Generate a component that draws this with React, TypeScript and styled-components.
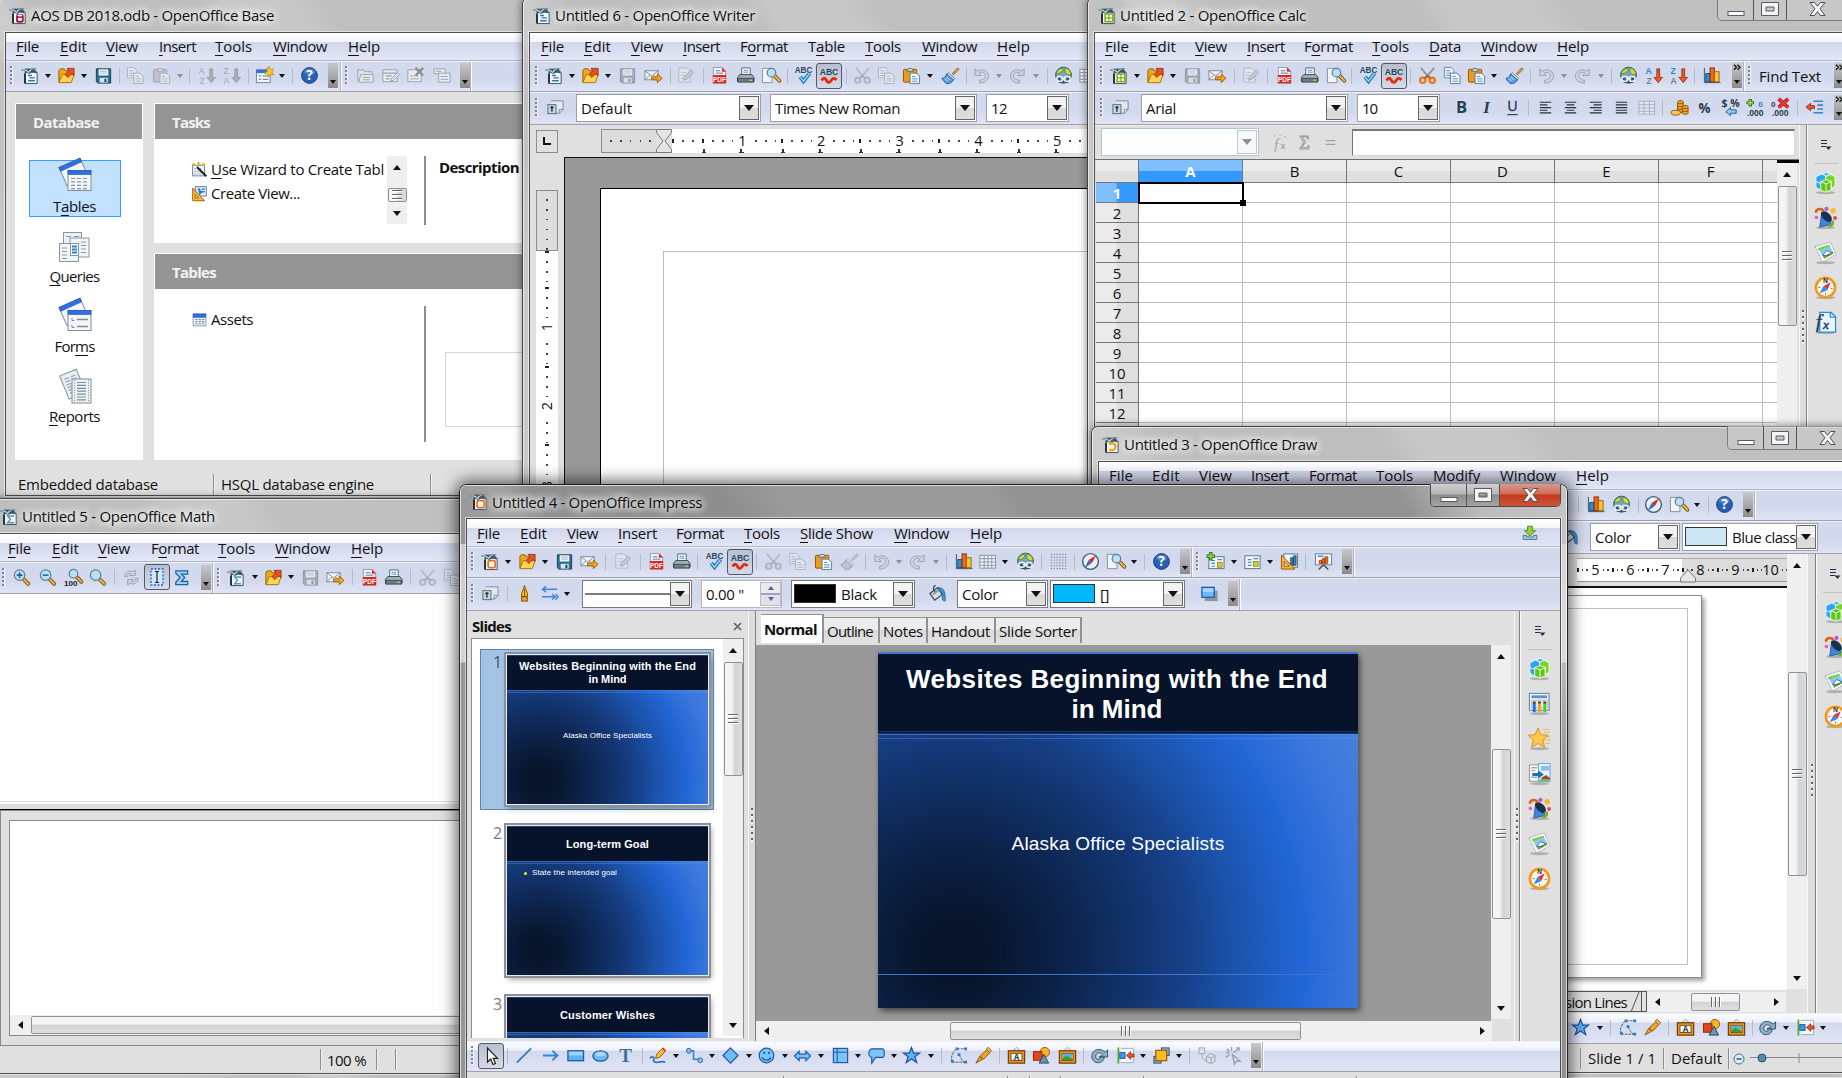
import React, { ReactNode, useLayoutEffect, useRef, useState } from 'react';
import styled, { createGlobalStyle, css } from 'styled-components';

const UI = '"Open Sans", "Noto Sans", sans-serif';
const ARIAL = '"Liberation Sans", Arial, sans-serif';

const Global = createGlobalStyle`
  * { box-sizing: border-box; }
  html, body { margin: 0; padding: 0; overflow: hidden; }
  body { font-family: ${UI}; font-size: 15px; line-height: 20px; color: #111; background: #c4c4c4; }
  svg { display: block; flex: none; }
`;

/* ---------- text ---------- */

const FitBox = styled.span<{ $w: number; $bold?: boolean; $color?: string; $size?: number; $font?: string; $lh?: number }>`
  display: block;
  flex: none;
  width: ${p => p.$w}px;
  white-space: nowrap;
  font-weight: ${p => (p.$bold ? 700 : 400)};
  color: ${p => p.$color || 'inherit'};
  font-size: ${p => p.$size || 15}px;
  font-family: ${p => p.$font || UI};
  line-height: ${p => (p.$lh ? p.$lh + 'px' : '20px')};
  u { text-decoration: underline; text-decoration-thickness: 1px; text-underline-offset: 3px; text-decoration-skip-ink: none; }
`;

type FitProps = { w: number; t: string; bold?: boolean; color?: string; size?: number; font?: string; lh?: number };
function Fit({ w, t, bold, color, size, font, lh }: FitProps) {
  const ref = useRef<HTMLSpanElement>(null);
  const [ls, setLs] = useState(0);
  const i = t.indexOf('_');
  const count = i < 0 ? t.length : t.length - 1;
  useLayoutEffect(() => {
    if (ref.current) setLs((w - ref.current.getBoundingClientRect().width) / count);
  }, [w, count]);
  return (
    <FitBox $w={w} $bold={bold} $color={color} $size={size} $font={font} $lh={lh}>
      <span ref={ref} style={{ letterSpacing: ls }}>
        {i < 0 ? t : <>{t.slice(0, i)}<u>{t[i + 1]}</u>{t.slice(i + 2)}</>}
      </span>
    </FitBox>
  );
}

/* ---------- icons ---------- */

const page = (x = 3, y = 2, w = 13, h = 16, s = '#3d5a6c') => (
  <path d={`M${x} ${y}h${w - 4}l4 4v${h - 4}h${-w}z`} fill="#eef3f6" stroke={s} />
);
const docBase = (
  <>
    <path d="M4.5 3.5h9l3.500 3.500v11.500h-12.500z" fill="#f0f5f7" stroke="#35505f" />
    <path d="M4 3h9.500l3 3.500v1.500c-3-1.500-6-1-8 .500-1-1-3-1.500-4.500-1z" fill="#3a5765" />
    <path d="M0 4.500c3.500-2 6-1 7.500 1.200C9.500 3 13 2 16 3c-4 0-6 2-8 5C6 5.500 4 4.500 0 4.500z" fill="#dbe7ee" stroke="#54707f" strokeWidth=".6" />
    <path d="M4.200 8v10.500" stroke="#14262f" strokeWidth="1.800" />
  </>
);
const lens = (x: number, y: number, r: number) => (
  <>
    <path d={`M${x + r * 0.7} ${y + r * 0.7}l5.2 5.4`} stroke="#6d4a0c" strokeWidth="4" strokeLinecap="round" />
    <path d={`M${x + r * 0.8} ${y + r * 0.8}l4.8 5`} stroke="#eeb445" strokeWidth="2.2" strokeLinecap="round" />
    <circle cx={x} cy={y} r={r} fill="#b9e0f7" stroke="#5f7f92" strokeWidth="1.3" />
  </>
);
const frame = (inner: ReactNode) => (
  <>
    <path d="M6 5l4-3.5L14 5" fill="none" stroke="#8d9aa5" />
    <rect x="1.5" y="5" width="17" height="13" fill="#e9a12c" stroke="#7a4205" strokeWidth="1.4" />
    <rect x="4.2" y="7.7" width="11.6" height="7.6" fill="#f7fafc" stroke="#7a4205" />
    {inner}
  </>
);
const winTop = (x: number, y: number, w: number, h: number, c = '#2f6fe4') => (
  <>
    <rect x={x} y={y} width={w} height={h} fill="#f2f6f9" stroke="#7f8e99" />
    <rect x={x} y={y} width={w} height="4" fill={c} stroke="#2450a8" strokeWidth=".6" />
  </>
);
const dashes = (x: number, y: number, c: number, r: number, dx: number, dy: number, col = '#8696a2', w = 3) => {
  let d = '';
  for (let j = 0; j < r; j++) for (let k = 0; k < c; k++) d += `M${x + k * dx} ${y + j * dy}h${w}`;
  return <path d={d} stroke={col} strokeWidth="1.2" />;
};
const bar = (ws: number[][]) => <path d={ws.map(([a, b], k) => `M${a} ${4.5 + k * 2.8}H${b}`).join('')} stroke="#26333d" strokeWidth="1.2" />;
const abcTxt = (y: number) => (
  <text x="10" y={y} fontSize="8.6" fontWeight="700" fontFamily="Liberation Sans, sans-serif" textAnchor="middle" fill="#26485c">ABC</text>
);
const tx = (x: number, y: number, s: number, t: string, fill: string, extra: object = {}) => (
  <text x={x} y={y} fontSize={s} fontWeight="700" fontFamily="Open Sans, sans-serif" fill={fill} {...extra}>{t}</text>
);
const small = { fontFamily: 'Liberation Sans, sans-serif' };
const downArrow = <path d="M13.500 3h3v9h3L15 17.500 10.500 12h3z" fill="#e8582a" stroke="#8a2306" strokeWidth=".8" />;
const shadow = <ellipse cx="12" cy="22.6" rx="10" ry="1.6" fill="#000" opacity=".22" />;

const glyphs: Record<string, ReactNode> = {
  writer: <>{docBase}<path d="M7.500 10h4M9 12.500h5.500M7.500 15.500h7" stroke="#2b78b5" strokeWidth="1.500" /></>,
  base: <>{docBase}<rect x="7.500" y="8.500" width="8" height="9" rx="2" fill="#a3134a" /><ellipse cx="11.500" cy="10" rx="2.600" ry="1" fill="#fff" /><rect x="9.500" y="12.500" width="4" height="3" fill="#fff" /></>,
  calc: <>{docBase}<rect x="7.500" y="8.500" width="8" height="8" fill="#fff" stroke="#7eb01a" strokeWidth="1.600" /><path d="M11.500 8.500v8M7.500 12.500h8" stroke="#7eb01a" strokeWidth="1.300" /></>,
  impress: <>{docBase}<rect x="7.500" y="9" width="7.500" height="7.500" rx="1.500" fill="#fff" stroke="#f26a12" strokeWidth="1.800" /></>,
  draw: <>{docBase}<path d="M7.500 10c4-3 7.500 0 6.500 3.500-1 3-4 3-6.500 2" fill="none" stroke="#f0a81c" strokeWidth="2.600" /></>,
  math: <>{docBase}<path d="M14 10.500v-1H8l3 3.500-3 3.500h6v-1" fill="none" stroke="#5f90bb" strokeWidth="1.500" /></>,
  open: <><path d="M2 17V4.500l1.500-1.500h4L9 5h6v3" fill="#f0a51e" stroke="#9a5a04" /><path d="M2 17.500L5.500 9H18l-3 8.500z" fill="#fdd456" stroke="#b06f08" /><path d="M8.500 9l4-4-2-2.500h7.500v7.500L15.500 8l-4 4z" fill="#e8541f" stroke="#8c1f06" strokeWidth=".8" /></>,
  save: <><path d="M2.500 3h15v15H4l-1.500-1.500z" fill="#2b6f97" stroke="#173f57" /><rect x="5" y="3.500" width="10" height="6.500" fill="#f4f8fa" /><path d="M6.500 5.500h7M6.500 7.500h7" stroke="#9db2be" /><rect x="6" y="12.500" width="8.500" height="5" fill="#dbe4ea" /><rect x="11" y="13.500" width="2" height="3.500" fill="#173f57" /></>,
  mail: <><rect x="1" y="5" width="14" height="9.500" fill="#eef2f4" stroke="#7d8b94" /><path d="M1 5l7 5.500L15 5M1 14.500l5-5M15 14.500l-5-5" fill="none" stroke="#7d8b94" /><path d="M8 11.500h6V8.500l5 4.500-5 4.500v-3H8z" fill="#f5a81f" stroke="#a15c05" /></>,
  edit: <>{page(3, 2, 12, 15, '#7a8890')}<path d="M5 7h6M5 10h6M5 13h4" stroke="#94a2ab" /><path d="M8 15l1-3.500L16 4l2.500 2.500-7 7.500z" fill="#d8b45a" stroke="#6c6350" /></>,
  pdf: <><path d="M3.500 1.500h9l4 4v13h-13z" fill="#f3f6f8" stroke="#8d9aa4" /><path d="M12.500 1v5h4.500z" fill="#e6311f" /><path d="M6 5h5M6 7.500h8" stroke="#3f7fb0" /><rect x="3" y="9.500" width="14" height="8.500" fill="#e4201c" /><text x="10" y="16.400" fontSize="6.800" fontWeight="700" textAnchor="middle" fill="#fff" fontFamily="Liberation Sans, sans-serif">PDF</text></>,
  print: <><path d="M6 2h9v8H6z" fill="#f4f7f9" stroke="#52697a" /><path d="M8 4.500h5M8 6.500h5" stroke="#5c98c8" /><path d="M4 9h12.500l2.500 3v4H1.500v-4z" fill="#a3b0b7" stroke="#384850" /><path d="M2 13h16.500v4H2z" fill="#6d7b82" stroke="#2d3a40" strokeWidth=".8" /><path d="M14 15h3" stroke="#8ee04a" strokeWidth="1.500" /></>,
  preview: <><path d="M1.500 2.500h10v15h-10z" fill="#f1f5f7" stroke="#82929d" />{lens(11, 7, 4.500)}</>,
  spell: <>{abcTxt(7.500)}<path d="M6.500 11.500l3.500 4.500 6.500-8.500" fill="none" stroke="#1c6fa8" strokeWidth="4" /><path d="M6.500 11.500l3.500 4.500 6.500-8.500" fill="none" stroke="#8ed0f5" strokeWidth="1.800" /></>,
  auto: <>{abcTxt(9)}<path d="M2.500 14.500c2-3 3.500-3 5 0s3.500 2 5-.500 3-2 5 0" fill="none" stroke="#e22c12" strokeWidth="2.800" /></>,
  cut: <><path d="M3 2l8.500 10M17 2L8.500 12" stroke="#8a98a2" strokeWidth="2" /><circle cx="5" cy="15" r="2.800" fill="none" stroke="#e87a16" strokeWidth="2.400" /><circle cx="15" cy="15" r="2.800" fill="none" stroke="#e87a16" strokeWidth="2.400" /><path d="M7 13l3-3 3 3" stroke="#c05a0a" strokeWidth="2" fill="none" /></>,
  copy: <><path d="M1.500 1.500h7l3 3v8h-10z" fill="#eff4f7" stroke="#6886a0" /><path d="M3.500 5h4M3.500 7.500h5M3.500 10h4" stroke="#4a8ccc" /><path d="M8 7.500h6.500l3.500 3v8H8z" fill="#f6f9fb" stroke="#5a7a94" /><path d="M10 11h3.500M10 13.500h6M10 16h6" stroke="#4a8ccc" /></>,
  paste: <><rect x="1.500" y="3.500" width="14" height="13.500" rx="1" fill="#e89b1c" stroke="#935403" /><path d="M5 5.500c0-4 7-4 7 0z" fill="#d9dee2" stroke="#5b6870" /><path d="M8.500 7.500h6.500l3.500 3v8h-10z" fill="#f6f9fb" stroke="#5a7a94" /><path d="M10.500 11h3.500M10.500 13.500h6M10.500 16h6" stroke="#4a8ccc" /></>,
  brush: <><path d="M12 8l5.500-6 1.500 1.500L13.500 9z" fill="#ecb64a" stroke="#86590c" /><path d="M7.500 7l7 6-2 2-7-6z" fill="#dfe6ea" stroke="#5d7c94" /><path d="M6 8.500l7 6c-1 3-5 4.500-7 4-2-1.500-4-3-5-5.500 2 0 4-1.500 5-4.500z" fill="#5a9fe0" stroke="#205a9c" /><path d="M4 13l3 3M6 11.500l3.500 3" stroke="#cfe6fa" /></>,
  undo: <path d="M3 3v7h7L7.500 7.500c4-2 7 0 6.500 3.500-.500 2.500-3 4-6 4v3c5 0 9-2.500 9.500-7S12 1.500 5.500 5.500z" fill="#cdd3da" stroke="#9aa2ac" />,
  redo: <path d="M17 3v7h-7l2.500-2.500c-4-2-7 0-6.500 3.500.500 2.500 3 4 6 4v3c-5 0-9-2.500-9.500-7S8 1.500 14.500 5.500z" fill="#cdd3da" stroke="#9aa2ac" />,
  globe: <><circle cx="10" cy="9.500" r="8.300" fill="#6fa6cc" stroke="#2f5a66" /><path d="M2 8c2-5 6-6 7-5s0 3-2 4-3 1-5 1zM12 2c4 1 6 4 6 7-2 1-5 0-6-2s-1-4 0-5z" fill="#c9d94a" stroke="#557a1a" strokeWidth=".8" /><path d="M3 12h14l-2 5.500-5 1-5-1z" fill="#35566a" /><rect x="3" y="11" width="6.500" height="5" rx="2.500" fill="none" stroke="#f2f6f8" strokeWidth="1.500" /><rect x="10.500" y="11" width="6.500" height="5" rx="2.500" fill="none" stroke="#f2f6f8" strokeWidth="1.500" /><path d="M7 13.500h6" stroke="#f2f6f8" strokeWidth="1.500" /></>,
  table: <><rect x="2" y="3.500" width="16.500" height="13.500" fill="#f4f7f9" stroke="#8295a2" /><path d="M2 7h16.500M2 10.500h16.500M2 14h16.500M6.500 3.500V17M10.500 3.500V17M14.500 3.500V17" stroke="#8295a2" /></>,
  merge: <><rect x="2" y="3.500" width="16.500" height="13.500" fill="#e2e6ee" stroke="#a9b0bc" /><path d="M2 7h16.500M2 10.500h16.500M2 14h16.500M7.500 3.500V17M13 3.500V17" stroke="#a9b0bc" /></>,
  grid: <path d={[2, 5, 8, 11, 14, 17].map(y => `M2 ${y + 0.5}H18`).join('')} stroke="#4c5562" strokeWidth="1" strokeDasharray="1 2" />,
  compass: <><circle cx="10" cy="10" r="8.300" fill="#e8f0f6" stroke="#46606f" strokeWidth="1.500" /><path d="M16 3.500L8 8.500l3.500 3z" fill="#e3281a" /><path d="M4 16.500l4-8 3.500 3z" fill="#2b6fd0" /></>,
  help: <><circle cx="10" cy="10" r="8.300" fill="#2a60b4" stroke="#15397c" /><ellipse cx="10" cy="6" rx="6" ry="3.500" fill="#6a9be0" opacity=".5" />{tx(10, 15.200, 14.500, '?', '#fff', { textAnchor: 'middle' })}</>,
  chart: <><path d="M2.500 2v15.500h17" fill="none" stroke="#3d4f5c" /><rect x="4" y="8" width="4.500" height="8.500" fill="#2e8fd5" stroke="#114a7a" /><rect x="8.500" y="2" width="4.500" height="14.500" fill="#ee6a1c" stroke="#8a2b04" /><rect x="13" y="6" width="5" height="10.500" fill="#fbc53a" stroke="#9a6205" /></>,
  az: <>{tx(1.5, 8.5, 9, 'A', '#2b84cf', small)}{tx(2.5, 19, 9, 'Z', '#76838d', small)}{downArrow}</>,
  za: <>{tx(1.5, 8.5, 9, 'Z', '#2b84cf', small)}{tx(1.5, 19, 9, 'A', '#76838d', small)}{downArrow}</>,
  styles: <><path d="M5 3h13v9l-4 4H9" fill="#e2e9ef" stroke="#7a8a99" /><path d="M18 12h-4v4z" fill="#fff" stroke="#7a8a99" /><rect x="2" y="7" width="8.500" height="9.500" fill="#c9d6de" stroke="#51687a" /><path d="M6.200 8.500v6M4.500 10h3.500" stroke="#22394a" strokeWidth="1.500" /></>,
  B: tx(10, 16, 17.500, 'B', '#26404f', { textAnchor: 'middle' }),
  I: <text x="10" y="16" fontSize="18" fontWeight="700" fontStyle="italic" fontFamily="Liberation Serif, serif" textAnchor="middle" fill="#26404f">I</text>,
  U: <><text x="10" y="14" fontSize="15" fontFamily="Open Sans, sans-serif" textAnchor="middle" fill="#26404f" stroke="#26404f" strokeWidth=".4">U</text><path d="M4.500 17.500h11" stroke="#26404f" strokeWidth="1.200" /></>,
  left: bar([[4, 16], [4, 12], [4, 16], [4, 12], [4, 16]]),
  center: bar([[4, 16], [6, 14], [4, 16], [6, 14], [4, 16]]),
  right: bar([[4, 16.5], [8, 16.5], [4, 16.5], [8, 16.5], [4, 16.5]]),
  just: bar([[4, 16], [4, 16], [4, 16], [4, 16], [4, 16]]),
  coins: <><rect x="8" y="3" width="6" height="12" rx="1.500" fill="#f2a92a" stroke="#945205" /><path d="M8 6h6M8 9h6M8 12h6" stroke="#945205" /><rect x="13" y="8" width="6" height="9" rx="1.500" fill="#f2a92a" stroke="#945205" /><path d="M13 11h6M13 14h6" stroke="#945205" /><ellipse cx="6" cy="15.500" rx="5" ry="2.500" fill="#fbc75a" stroke="#945205" /></>,
  pct: tx(10, 15.500, 14, '%', '#2b3d4c', { textAnchor: 'middle' }),
  dpct: <>{tx(10, 9.500, 11, '$ %', '#2b3d4c', { textAnchor: 'middle' })}<path d="M16 12.500h-6v-2.500l-5 4.500 5 4v-2.500h6z" fill="#8ccdf2" stroke="#1b5f92" /></>,
  adec: <><path d="M4.500 1v8M.500 5h8" stroke="#2c7a10" strokeWidth="3.400" /><path d="M4.500 2v6M1.500 5h6" stroke="#9be05a" strokeWidth="1.400" />{tx(13, 9, 8.500, '0', '#2b7ad0', small)}{tx(1, 18.500, 9, '.000', '#2b3d4c', small)}</>,
  ddec: <>{tx(0, 9, 8.500, '0', '#2b3d4c', small)}{tx(1, 18.500, 9, '.000', '#2b3d4c', small)}<path d="M8 1l10 9M18 1L8 10" stroke="#a30d0d" strokeWidth="3.800" /><path d="M8 1l10 9M18 1L8 10" stroke="#f23a2c" strokeWidth="2.200" /></>,
  outdent: <><path d="M9 3.500h10M13 7.500h6M13 11.500h6M9 15.500h10" stroke="#3d82c2" strokeWidth="1.600" /><path d="M10 8v3H6v2.500L1 9.500 6 5.500V8z" fill="#e8582a" stroke="#8a2306" strokeWidth=".8" /></>,
  fxw: <><text x="3" y="17" fontSize="17" fontStyle="italic" fontFamily="Liberation Serif, serif" fill="#a9a9a9">ƒ</text>{tx(11, 17, 9, 'x', '#a9a9a9')}<path d="M4 3h2M10 2h2M15 4h2" stroke="#b5b5b5" strokeWidth="1.500" /></>,
  sumg: <text x="10" y="17" fontSize="19" fontFamily="Liberation Serif, serif" textAnchor="middle" fill="#dcdcdc" stroke="#9d9d9d">Σ</text>,
  eqg: <path d="M5 8h10M5 12h10" stroke="#9f9f9f" strokeWidth="1.200" />,
  sigma: <path d="M4 3h12.500v3.500H10l3.500 3.500L10 14h6.500v3.500H4V15l4.500-5L4 5.500z" fill="#9cd0f2" stroke="#1b62a0" strokeWidth="1.300" />,
  zin: <>{lens(8, 7.500, 5.500)}<path d="M5 7.500h6M8 4.500v6" stroke="#1c5f9c" strokeWidth="1.600" /></>,
  zout: <>{lens(8, 7.500, 5.500)}<path d="M5 7.500h6" stroke="#1c5f9c" strokeWidth="1.600" /></>,
  z100: <>{lens(10, 6, 4.500)}<text x="0" y="18.500" fontSize="8.500" fontWeight="700" fontFamily="Liberation Sans, sans-serif" fill="#222">100</text></>,
  zall: lens(8, 7.500, 5.500),
  refresh: <path d="M3 9c0-5 5-7 9-5l2-2v6H8l2-2C7 5 5 7 6 9zM17 11c0 5-5 7-9 5l-2 2v-6h6l-2 2c3 1 5-1 4-3z" fill="#cdd3da" stroke="#9aa2ac" />,
  fcursor: <><rect x="4" y="2" width="12" height="16" fill="#cfe6fa" stroke="#1f62d6" strokeWidth="1.300" strokeDasharray="2 1.500" /><path d="M8 4.500h4M8 15.500h4M10 4.500v11" stroke="#222" strokeWidth="1.200" /></>,
  slidenew: <><rect x="3" y="5" width="16" height="12.500" fill="#f6f8f8" stroke="#587284" /><path d="M5.500 9h4M5.500 12h4M5.500 15h4M12 8h5" stroke="#3f90cc" strokeWidth="1.300" /><rect x="12" y="11" width="5" height="5" fill="#d7c832" stroke="#7d7310" strokeWidth=".7" /><path d="M5 0v9M.500 4.500h9" stroke="#2c7a10" strokeWidth="3.600" /><path d="M5 1v7M1.500 4.500h7" stroke="#8fdd4a" strokeWidth="1.500" /></>,
  slide: <><rect x="2" y="4" width="16" height="13.500" fill="#f6f8f8" stroke="#587284" /><path d="M5 8h4M5 11h4M5 14h4M11 7h5" stroke="#3f90cc" strokeWidth="1.300" /><rect x="11" y="10" width="5" height="5" fill="#d7c832" stroke="#7d7310" strokeWidth=".7" /></>,
  design: <><rect x="4" y="2" width="14.500" height="14" fill="#eef4f8" stroke="#587284" /><path d="M11 14V6h3v8zM14 14V4h3v10z" fill="#3f7fb0" stroke="#1d415c" strokeWidth=".7" /><path d="M1.500 3v15h14z" fill="#fbb52c" stroke="#96540a" /><path d="M4.500 10v5h5z" fill="#eef4f8" stroke="#96540a" /></>,
  present: <><rect x="1.500" y="2" width="17" height="11.500" fill="#f1f4f6" stroke="#6b7f8c" /><path d="M4 4.500h6" stroke="#4b8fcc" strokeWidth="1.500" /><path d="M5.500 12V9h3v3zM8.500 12V7h3v5zM11.500 12V5h3v7z" fill="#e8742c" stroke="#8a2b04" strokeWidth=".7" /><path d="M10 13.500L5 18.500M10 13.500l5 5" stroke="#48555d" strokeWidth="1.600" /></>,
  pen: <><path d="M7 13c-1-4 2-7 3-11.500C11 6 14 9 13 13z" fill="#fbc026" stroke="#7d4a03" /><path d="M10 5v7" stroke="#7d4a03" /><rect x="7" y="13.500" width="6" height="4.500" fill="#f2a31c" stroke="#7d4a03" /></>,
  arrows: <path d="M18 5.500H3M6.500 2.500L2.500 5.500l4 3M2 13.500h15M13 10.500l2.500 3-2.500 3M16.500 10.500l2.500 3-2.500 3" fill="none" stroke="#3a86dc" strokeWidth="1.500" />,
  bucket: <><path d="M2 10l8-6 5 7-8 6z" fill="#d8dfe4" stroke="#36444e" strokeWidth="1.200" /><path d="M8 1.500c-3 1-3 5 0 7" fill="none" stroke="#36444e" strokeWidth="1.300" /><path d="M10 4c5-1 9 2 8 14-2 0-3-1-3-4V10z" fill="#3f94d2" stroke="#1d5c8e" strokeWidth=".8" /><path d="M5 11l6-4.500" stroke="#8a979f" strokeWidth="2" /></>,
  shadowed: <><rect x="5" y="7" width="13.500" height="11" fill="#8f959f" /><rect x="2" y="3.500" width="13" height="10.500" fill="#6fb7f5" stroke="#1f5cb0" strokeWidth="1.400" /><rect x="3" y="4.500" width="11" height="4" fill="#a7d6fb" /></>,
  download: <><path d="M1.500 13h4v2h9v-2h4v5h-17z" fill="#a9d4ee" stroke="#2a607e" /><path d="M7 1.500h6v5.500h4L10 14 3 7h4z" fill="#93cf3a" stroke="#3f7a0d" /></>,
  pointer: <path d="M6.500 2v14l3.200-3 2.300 5.500 2.500-1-2.300-5.200h4.300z" fill="#fff" stroke="#222" strokeWidth="1.200" />,
  line: <path d="M3 17.500L18 2.500" stroke="#3273bd" strokeWidth="1.700" />,
  arrow: <path d="M2 10h15M12 5l5.500 5-5.500 5" fill="none" stroke="#3a86d6" strokeWidth="1.900" />,
  rect: <><rect x="2" y="5" width="16.500" height="10.500" fill="#5cb1f2" stroke="#1c55a0" strokeWidth="1.300" /><rect x="3" y="6" width="14.500" height="4" fill="#9dd2fa" /></>,
  ellipse: <><ellipse cx="10" cy="10.500" rx="8" ry="5.500" fill="#6dbaf4" stroke="#1c55a0" strokeWidth="1.300" /><ellipse cx="10" cy="8.500" rx="5.500" ry="2.300" fill="#a9d8fb" /></>,
  T: <text x="10" y="17" fontSize="20" fontWeight="700" fontFamily="Liberation Serif, serif" textAnchor="middle" fill="#3f7396">T</text>,
  pencil: <><path d="M1 13c2-3 5-1 4 1s1 4 5 3c2-.500 4-1 7 0" fill="none" stroke="#2f76b8" strokeWidth="1.800" /><path d="M7 13l1-4 6.500-7 3 3-6.500 7z" fill="#fbc23a" stroke="#8a5208" /><path d="M13.500 3l3 3 1.500-1.500-3-3z" fill="#e0442a" /></>,
  connector: <><path d="M4 5h5v9h7" fill="none" stroke="#3a82d0" strokeWidth="1.700" /><circle cx="4" cy="5" r="2.500" fill="#8bc4f2" stroke="#1f5ca8" /><circle cx="16" cy="15" r="2.500" fill="#8bc4f2" stroke="#1f5ca8" /></>,
  diamond: <path d="M10 2l8 8-8 8-8-8z" fill="#6dbcf5" stroke="#1c55a0" strokeWidth="1.200" />,
  smile: <><circle cx="10" cy="10" r="7.700" fill="#7cc4f6" stroke="#1c55a0" strokeWidth="1.200" /><path d="M5.500 12c2 4 7 4 9 0" fill="none" stroke="#1c55a0" strokeWidth="1.300" /><path d="M7.500 6v2.500M12.500 6v2.500" stroke="#1c55a0" strokeWidth="1.700" /></>,
  dbl: <path d="M1.500 10.500L6.500 5.500v3h7v-3l5 5-5 5v-3h-7v3z" fill="#7cc4f6" stroke="#1c60b0" strokeWidth="1.200" />,
  flow: <><rect x="2.500" y="2.500" width="15" height="15" fill="#7cc4f6" stroke="#1c55a0" strokeWidth="1.200" /><path d="M6.500 2.500v15M2.500 6.500h15" stroke="#1c55a0" /></>,
  callout: <path d="M5 3h11c3 0 3 9 0 9H9l-4 6v-6c-4 0-4-9 0-9z" fill="#7cc4f6" stroke="#1c55a0" strokeWidth="1.200" />,
  star: <path d="M10 1.500l2.300 6h6.200l-5 3.800 2 6.200-5.500-3.800-5.500 3.800 2-6.200-5-3.800h6.200z" fill="#62aef2" stroke="#1a4d96" strokeWidth="1.200" />,
  points: <><path d="M3 17C1 10 6 4 8 3h9M10 10c3 0 2 6 7 7M3 17h14" fill="none" stroke="#4a5a66" strokeDasharray="3 1" /><path d="M2 16h3M7 3h3M16 3h3M9 9h3M16 17h3" stroke="#2f7cc4" strokeWidth="3" /></>,
  glue: <><path d="M2 18l4-7 3 3zM6.500 10.500l7-6.500 3 3-6.500 7z" fill="#f5a623" stroke="#8a5208" /><path d="M13 3l2-1.500 3.500 3.500-2 2z" fill="#f9cf68" stroke="#8a5208" /></>,
  tframe: frame(tx(10, 14.8, 8.500, 'A', '#24424f', { textAnchor: 'middle' })),
  pframe: frame(<><rect x="4.700" y="8.200" width="10.600" height="4" fill="#58b0e8" /><path d="M4.700 15v-2.500l4-2 6.600 2.500v2z" fill="#3f9a28" /></>),
  shapes: <><circle cx="13.500" cy="6.500" r="5" fill="#fbb52c" stroke="#96540a" /><rect x="1.500" y="6" width="9" height="9" fill="#e2471c" stroke="#8a2306" /><path d="M12.500 8.500l5 9.500h-10z" fill="#6d93a8" stroke="#2b4656" /></>,
  rotate: <path d="M18.500 4v7.500h-7.500l2.500-2.500c-3-3-7-2-7.500 1.500-.300 3 3 4.500 5 2.500l-1.500-1.500 1-1 4.500 1.500c-.500 4-4 6-7.500 5.500C4 17 1.500 14 2 10c.500-6 8-9 14-3.500z" fill="#8db0c6" stroke="#2d5064" />,
  align: <><path d="M2.500 1.500v17" stroke="#4fae1e" strokeWidth="1.800" /><path d="M5 2.500h13.500v15H5" fill="#f4f7f9" stroke="#a1acb4" /><rect x="4" y="7" width="5.500" height="6" fill="#3f9be6" stroke="#1c55a0" /><path d="M19 8.500v3h-3.500v2.500L11 10l4.500-4v2.500z" fill="#e8582a" stroke="#8a2306" strokeWidth=".8" /></>,
  arrange: <><rect x="10" y="2" width="8" height="8" fill="#8eb4c8" stroke="#2d5064" /><rect x="2" y="11" width="7.500" height="7" fill="#8eb4c8" stroke="#2d5064" /><rect x="4" y="4.500" width="11.500" height="11" fill="#fbb829" stroke="#96540a" strokeWidth="1.200" /></>,
  extrude: <path d="M2 2h6v6H2zM5 8c0 5 2 7 5 7M10 11l4-3 5 2v6l-4 2.500-5-2zM10 11l5 2 4-3M15 13v5" fill="#dfe3ea" stroke="#9aa2ac" />,
  spark: <path d="M3 7h4M4 3l3 3M9 1v4M3 12l4-3M11 7l6-5M14 2h3v3M10 9l8 7h-4l-2 3z" fill="none" stroke="#9aa2ac" strokeWidth="1.500" />,
  formnew: <><rect x="1.500" y="4" width="14.500" height="13.500" fill="#f2f6f9" stroke="#6886a0" /><rect x="1.500" y="4" width="14.500" height="3.500" fill="#2f6fe4" /><path d="M4 10.500h2.500M8 10.500h6M4 14h2.500M8 14h6" stroke="#7f8e99" strokeWidth="1.300" /><path d="M14.500 0l1.500 3.500L19.500 3 18 6.500l2 3-4-.500-2 3-1-3.500-3.500-1L13 5.500l-1-3.500 2 1z" fill="#fbc62c" stroke="#b87a08" strokeWidth=".6" /></>,
  tblopen: <><path d="M2 16V4h6l1 2h8v3" fill="#dfe3ea" stroke="#9aa2ac" /><path d="M3 17l2-8h13v8z" fill="#e8ebf0" stroke="#9aa2ac" /><path d="M7 12h8M7 14.500h8" stroke="#9aa2ac" /></>,
  tbledit: <><rect x="2" y="4" width="15" height="12.500" fill="#e8ebf0" stroke="#9aa2ac" /><path d="M2 7.500h15M5 10.500h6M5 13.500h4" stroke="#9aa2ac" strokeWidth="1.300" /><path d="M10 16l1-3 6.500-6 2 2-6.500 6z" fill="#dfe3ea" stroke="#9aa2ac" /></>,
  tbldel: <><rect x="2" y="4" width="14" height="12.500" fill="#e8ebf0" stroke="#9aa2ac" /><path d="M5 10.500h8M5 13.500h8" stroke="#9aa2ac" strokeDasharray="2 1" strokeWidth="1.300" /><path d="M10 2l8 8M18 2l-8 8" stroke="#868e98" strokeWidth="2.400" /></>,
  tblren: <><rect x="2" y="3" width="12" height="5" fill="#e8ebf0" stroke="#9aa2ac" /><rect x="7" y="7.500" width="12" height="9.500" fill="#e8ebf0" stroke="#9aa2ac" /><path d="M4 5.500h6M9 11h8M9 14h8" stroke="#9aa2ac" /></>,
  tasktbl: <><rect x="2" y="5" width="14" height="12.500" fill="#f2f6f9" stroke="#53718a" /><path d="M4 9h9M4 12h9M4 15h9" stroke="#7f8e99" strokeDasharray="2 1" /><path d="M7 7l11 11" stroke="#1d242a" strokeWidth="2.400" /><path d="M1 4h4M3 2v4M7 3h4M9 1v4M13 4h4M15 2v4" stroke="#f3b51c" strokeWidth="1.700" /></>,
  taskview: <><rect x="5" y="2" width="13" height="11" fill="#e3edf5" stroke="#53718a" /><path d="M8 5h3M13 5h3M13 8h3" stroke="#2f6fe4" strokeWidth="1.600" /><path d="M8 4l6 4-4 4z" fill="#2b7ad0" /><path d="M2 3.500v15h14z" fill="#fbb52c" stroke="#96540a" /><path d="M5 11v4h4z" fill="#fff" stroke="#96540a" /></>,
  asset: <>{winTop(2.5, 3.5, 15, 14)}{dashes(5, 10, 3, 3, 4, 2.500, '#7688a0', 2.600)}</>,
};

const big: Record<string, ReactNode> = {
  tables: <><g transform="rotate(-24 8 10)">{winTop(3, 4, 23, 20)}</g>{winTop(10, 9.5, 23, 20)}{dashes(13, 17.5, 3, 4, 6, 3.400, '#8696a2', 4)}</>,
  forms: <><g transform="rotate(-24 8 10)">{winTop(3, 4, 23, 20)}</g>{winTop(10, 9.5, 23, 20)}<path d="M14 17v2.500h2.500M14 24v2.500h2.500" fill="none" stroke="#7c8c98" /><path d="M19 18.500h11M19 25.500h11" stroke="#7c8c98" strokeWidth="1.300" /></>,
  queries: <><rect x="5.500" y="1.500" width="18" height="22" fill="#eef2f5" stroke="#8996a0" /><rect x="12" y="7" width="19" height="19" fill="#f2f5f7" stroke="#8996a0" /><rect x="1.500" y="12.500" width="19" height="18" fill="#f2f5f7" stroke="#8996a0" />{dashes(4, 17, 1, 4, 6, 3.500, '#8996a0', 5)}{dashes(23, 11, 1, 4, 6, 3.500, '#8996a0', 5)}<path d="M8 5.500h5M16 5.500h5" stroke="#8996a0" /><rect x="12.500" y="12.500" width="8" height="12" fill="#fff" stroke="#8996a0" /><path d="M14 15.500h5M14 18.500h5M14 21.500h5" stroke="#2f7fd2" strokeWidth="2" /></>,
  reports: <><g transform="rotate(-22 8 10)"><rect x="4" y="3" width="18" height="25" fill="#e9eef2" stroke="#8996a0" />{dashes(7, 8, 2, 6, 7, 3, '#9aa7b1', 5)}</g><rect x="14" y="8" width="19" height="24" fill="#eef2f5" stroke="#7f8c96" />{dashes(19, 11.5, 1, 7, 6, 2.900, '#7f8c96', 9)}<path d="M16.500 9v22M30.500 9v22" stroke="#7f8c96" strokeDasharray="1 1.500" /></>,
};

const side: Record<string, ReactNode> = {
  cubes: <>{shadow}<path d="M2 6l6-3 4 2v14l-5 1-5-3z" fill="#2fa4f4" stroke="#e8f6ff" /><path d="M8 3l5-1.500 5 2-5 2z" fill="#46b6e0" stroke="#e8f6ff" /><path d="M12 6l5-2.500 5 2.500v10l-5 3-5-3z" fill="#79d42a" stroke="#efffe0" /><path d="M7 11l6-2 5 2v9l-6 2-5-2z" fill="#5ec51a" stroke="#efffe0" /><path d="M12.500 13.500v8M2 11l5 2M18 10v9M12.500 13.500L18 11M7 11l5.500 2.500" stroke="#efffe0" fill="none" /></>,
  wizard: <>{shadow}<path d="M8 7l11 12-13 3z" fill="#3b86d8" stroke="#1c4d8c" strokeWidth=".8" /><ellipse cx="13" cy="11" rx="4" ry="7" transform="rotate(-45 13 11)" fill="#16324c" /><path d="M2 7c0-5 7-5 8-1" fill="none" stroke="#d8621a" strokeWidth="2.600" /><path d="M15 20.500c3 1 6-2 4-5" fill="none" stroke="#72b22c" strokeWidth="2.800" /><circle cx="2.500" cy="12" r="1.900" fill="#f25aa8" /><circle cx="13" cy="3" r="2.200" fill="#b45ae8" /><circle cx="20" cy="5" r="2.800" fill="#f7b928" /><circle cx="22" cy="12.500" r="2" fill="#ee4040" /></>,
  picture: <>{shadow}<path d="M1 6l16-5 6 13-14 8z" fill="#fbfbfb" stroke="#9aa2a6" strokeDasharray="2 1" /><path d="M4 7.500L16 4l4.500 9-10 5.500z" fill="#8cc8f4" /><path d="M4 7.500L16 4l.700 1.500L5 10z" fill="#79d42a" /><path d="M10.500 18.500l10-5.500-1-2-10 5z" fill="#63a82e" /><path d="M9 15l4-5 5 2-3 3z" fill="#fff" stroke="#2b6ea8" /><path d="M13 15l2-2 1 2z" fill="#8a4a1c" /></>,
  nav: <>{shadow}<circle cx="12" cy="12" r="10" fill="#fff" stroke="#f29a1c" strokeWidth="2.800" /><circle cx="12" cy="12" r="7.500" fill="#f3f6f8" /><path d="M17.500 6.500l-3.500 8-4-4z" fill="#e03a30" /><path d="M6 18l4-7.500 4 4z" fill="#3a86e0" />{tx(9.500, 7.800, 6.500, 'N', '#333')}<path d="M4.500 12h2M17.500 13h2M12 17.500v2" stroke="#777" /></>,
  fx: <>{shadow}<path d="M6 1.500h12l4.500 4.500v16H6z" fill="#eaf4fc" stroke="#2a8cd8" strokeWidth="1.300" /><path d="M17 1.500v5h5.500" fill="none" stroke="#2a8cd8" strokeWidth="1.300" /><text x="2" y="18" fontSize="20" fontStyle="italic" fontFamily="Liberation Serif, serif" fill="#1f3e66" stroke="#1f3e66" strokeWidth=".5">f<tspan x="9.500" y="18.500" fontSize="14">x</tspan></text></>,
  props: <>{shadow}<rect x="1.500" y="1.500" width="20.500" height="17.500" fill="#f6f8fa" stroke="#6d8cae" strokeWidth="1.200" /><rect x="3.500" y="3.500" width="16.500" height="3" fill="#5d94cc" /><rect x="3.500" y="8.500" width="16.500" height="8" fill="#e0e8f0" stroke="#aebccb" /><path d="M6.500 11v10" stroke="#1f6fe0" strokeWidth="3" /><path d="M12 11v10" stroke="#f2a51c" strokeWidth="3" /><path d="M17.500 11v10" stroke="#4fd028" strokeWidth="3" /><path d="M5 11h3M10.500 11h3M16 11h3" stroke="#6b3a12" strokeWidth="2" /></>,
  fav: <>{shadow}<path d="M15 2.500h8M17 5.500h6M18 10h5M17 13.500h6M18 17h5" stroke="#e8b458" /><path d="M10.500 1l3 7 7.500.600-5.500 5 1.800 7.700-6.800-4.200-6.800 4.200L5.500 13.600 0 8.600 7.500 8z" fill="#fcc84a" stroke="#cf8c1c" strokeWidth=".9" /></>,
  trans: <>{shadow}<rect x="1.500" y="3" width="12" height="17" fill="#fafafa" stroke="#8a949c" /><path d="M3.500 6h6M3.500 9h4M3.500 16h6" stroke="#9aa6ae" strokeWidth="1.500" /><rect x="11" y="1.500" width="12" height="19" fill="#e8f4fd" stroke="#5ea4e4" /><rect x="13.500" y="4" width="9" height="5" fill="#8cc0f5" /><path d="M14 18.500v-2l5-3 4 3.500v1.500z" fill="#9a4a2c" /><path d="M12 18h10v2H12z" fill="#78c03c" /><path d="M4.500 11.500h6V8.500l6 4.500-6 4.500v-3h-6z" fill="#1e6fb8" /></>,
};

const Svg = styled.svg<{ $s: number; $dim?: boolean }>`
  width: ${p => p.$s}px;
  height: ${p => p.$s}px;
  overflow: visible;
  ${p => p.$dim && css`filter: grayscale(1); opacity: 0.42;`}
`;
const Icon = ({ n, s = 20, dim }: { n: string; s?: number; dim?: boolean }) => (
  <Svg $s={s} $dim={dim} viewBox="0 0 20 20">{glyphs[n]}</Svg>
);
const SideIcon = ({ n }: { n: string }) => <Svg $s={23} viewBox="0 0 24 24">{side[n]}</Svg>;

/* ---------- windows ---------- */

const Desktop = styled.div`
  position: relative;
  width: 1842px;
  height: 1078px;
  overflow: hidden;
  background: #b0b0b0;
`;
const Win = styled.section<{ $l: number; $t: number; $w: number; $h: number; $active?: boolean }>`
  position: absolute;
  left: ${p => p.$l}px;
  top: ${p => p.$t}px;
  width: ${p => p.$w}px;
  height: ${p => p.$h}px;
  display: flex;
  flex-direction: column;
  padding: 0 7px 6px;
  border-radius: 7px 7px 0 0;
  ${p => p.$active
    ? css`
      background: linear-gradient(180deg, transparent 60px, rgba(220,220,220,.75) 60px, rgba(225,225,225,.8) 178px, transparent 179px),
        linear-gradient(60deg, #969696 0 22%, #a2a2a2 27%, #8e8e8e 29% 42%, #9b9b9b 46% 60%, #929292 62% 88%, #bcbcbc 93%, #c6c6c6);
      box-shadow: inset 0 0 0 1px #222, inset 0 0 0 2px rgba(255,255,255,.65), 0 0 16px 3px rgba(0,0,0,.62);`
    : css`
      background: linear-gradient(55deg, #c9c9c9 0 20%, #c2c2c2 26% 34%, #cccccc 35% 38%, #bebebe 42% 60%, #c8c8c8 63% 70%, #bfbfbf 74%);
      box-shadow: inset 0 0 0 1px #444, inset 0 0 0 2px rgba(255,255,255,.6), 0 0 8px rgba(0,0,0,.5);`}
`;
const TitleBar = styled.header<{ $h: number }>`
  height: ${p => p.$h}px;
  flex: none;
  display: flex;
  padding-left: 4px;
`;
const TitleText = styled.div`
  display: flex;
  align-items: center;
  gap: 3px;
  padding-top: 1px;
  text-shadow: 0 0 8px #fff, 0 0 8px #fff, 0 0 12px #fff;
`;
const Client = styled.div`
  flex: 1;
  min-height: 0;
  display: flex;
  flex-direction: column;
  border: 1px solid #505050;
  outline: 1px solid rgba(255, 255, 255, 0.55);
  background: #e0e0e0;
  overflow: hidden;
`;
const Caption = styled.div<{ $active?: boolean; $h: number }>`
  margin-left: auto;
  height: ${p => p.$h}px;
  display: grid;
  grid-template-columns: 35px 33px 61px;
  border: 1px solid ${p => (p.$active ? '#4a4a4a' : '#7c7c7c')};
  border-top: 0;
  border-radius: 0 0 5px 5px;
  overflow: hidden;
`;
const CapBtn = styled.span<{ $active?: boolean; $red?: boolean }>`
  display: flex;
  align-items: center;
  justify-content: center;
  & + & { border-left: 1px solid ${p => (p.$active ? '#555' : '#8c8c8c')}; }
  background: ${p => p.$red ? 'linear-gradient(#d99a8c 0, #cf6a55 45%, #c23a1e 50%, #d0533a)'
    : p.$active ? 'linear-gradient(#cfcfcf 0, #b4b4b4 45%, #8c8c8c 50%, #a5a5a5)' : 'rgba(205,205,205,.6)'};
`;

function Window({ l, t, w, h, icon, title, tw, th = 35, caption, active, children }: {
  l: number; t: number; w: number; h: number; icon: string; title: string; tw: number; th?: number; caption?: boolean; active?: boolean; children: ReactNode;
}) {
  return (
    <Win $l={l} $t={t} $w={w} $h={h} $active={active}>
      <TitleBar $h={th}>
        <TitleText>
          <Icon n={icon} s={19} />
          <Fit w={tw} t={title} />
        </TitleText>
        {caption && (
          <Caption $h={active ? 23 : 24} $active={active}>
            <CapBtn $active={active}><svg width="18" height="16"><rect x="1" y="10.500" width="16" height="4" fill="#fff" stroke="#5a5a6a" /></svg></CapBtn>
            <CapBtn $active={active}><svg width="18" height="16"><path d="M.500 1.500h17v13H.500zM5 6v4h8V6z" fill="#f4f4f4" fillRule="evenodd" stroke="#5a5a6a" /></svg></CapBtn>
            <CapBtn $active={active} $red={active}><svg width="17" height="16"><path d="M1 1.500h4.500l3 3.800 3-3.800H16l-5 6.300 5 6.700h-4.500l-3-4-3 4H1l5-6.700z" fill="#f6f6f6" stroke="#4d4d5e" /></svg></CapBtn>
          </Caption>
        )}
      </TitleBar>
      <Client>{children}</Client>
    </Win>
  );
}

/* ---------- bars ---------- */

const MenuBar = styled.div<{ $up?: boolean }>`
  height: 28px;
  flex: none;
  display: flex;
  align-items: center;
  padding-bottom: ${p => (p.$up ? 2 : 0)}px;
  background: linear-gradient(#ffffff 0, #f3f6fb 9px, #d2d8ec 9.500px, #e2e6f6 27px);
  border-bottom: 1px solid #b4b7c2;
`;
const ToolBar = styled.div<{ $h: number; $glow?: boolean }>`
  height: ${p => p.$h}px;
  flex: none;
  display: flex;
  align-items: center;
  padding-bottom: 2px;
  background: ${p => (p.$glow ? 'linear-gradient(#fafbfe 0, #eef1fa 8px, #d3d9ed 9px, #e0e4f5)' : 'linear-gradient(#d4daee, #d3d9ed 60%, #dfe4f5)')};
  border-bottom: 1px solid #9fa2ac;
  border-top: 1px solid #eef0f8;
  overflow: hidden;
`;
const Slot = styled.div<{ $w: number }>`
  flex: none;
  display: flex;
  align-items: center;
  justify-content: center;
  width: ${p => p.$w}px;
`;
const Grip = styled.i`
  width: 3px;
  height: 19px;
  background: repeating-linear-gradient(#80848e 0 2px, transparent 2px 4px);
  border-right: 1px solid #f4f5fa;
`;
const Sep = styled.i<{ $full?: boolean }>`
  width: ${p => (p.$full ? 2 : 1)}px;
  height: ${p => (p.$full ? 34 : 16)}px;
  background: ${p => (p.$full ? 'linear-gradient(90deg,#b0b2bb 50%,#fff 50%)' : '#b9bbc4')};
`;
const Tri = styled.i<{ $dim?: boolean; $dir?: 'u' | 'l' | 'r'; $s?: number }>`
  display: block;
  flex: none;
  width: 0;
  height: 0;
  border: ${p => p.$s || 3}px solid transparent;
  ${p => {
    const c = p.$dim ? '#8d8f98' : '#111';
    const s = p.$s || 3;
    if (p.$dir === 'u') return `border-bottom: ${s + 1}px solid ${c}; border-top: 0;`;
    if (p.$dir === 'l') return `border-right: ${s + 1}px solid ${c}; border-left: 0;`;
    if (p.$dir === 'r') return `border-left: ${s + 1}px solid ${c}; border-right: 0;`;
    return `border-top: ${s + 1}px solid ${c}; border-bottom: 0;`;
  }}
`;
const Overflow = styled.span`
  width: 10px;
  height: 25px;
  flex: none;
  display: flex;
  flex-direction: column;
  align-items: center;
  justify-content: flex-end;
  padding-bottom: 4px;
  background: linear-gradient(#c6c8cc, #8b8b8b);
  svg { margin: 1px 0 auto; }
`;
const Pressed = styled.span`
  width: 26px;
  height: 26px;
  display: flex;
  align-items: center;
  justify-content: center;
  border: 1.500px solid #50586a;
  border-radius: 3px;
  background: linear-gradient(#b9bfce, #d5dae8);
`;

type Item = [number, string] | { a: number; b: number; n: ReactNode };
const kindWidth: Record<string, number> = { '|': 1, '::': 3, v: 6, V: 6, o: 10, O: 10, '||': 2 };

function part(k: string) {
  switch (k) {
    case '|': return <Sep />;
    case '||': return <Sep $full />;
    case '::': return <Grip />;
    case 'v': return <Tri />;
    case 'V': return <Tri $dim />;
    case 'o': return <Overflow><Tri /></Overflow>;
    case 'O': return <Overflow><svg width="8" height="7"><path d="M1 .800l2.500 2.500L1 5.800M4.500 .800L7 3.300 4.500 5.800" fill="none" stroke="#111" strokeWidth="1.300" /></svg><Tri /></Overflow>;
  }
  if (k[0] === '*') return <Pressed><Icon n={k.slice(1)} /></Pressed>;
  if (k[0] === '-') return <Icon n={k.slice(1)} s={19} dim />;
  return <Icon n={k} s={19} />;
}
const Gap = styled.span<{ $w: number }>`flex: none; margin-left: ${p => p.$w}px;`;

function Strip({ from, items }: { from: number; items: Item[] }) {
  let x = from;
  return (
    <>
      {items.map((it, i) => {
        const w = Array.isArray(it) ? kindWidth[it[1]] ?? (it[1][0] === '*' ? 26 : 19) : it.b - it.a;
        const start = Array.isArray(it) ? it[0] - Math.floor(w / 2) : it.a;
        const gap = start - x;
        x = start + w;
        return (
          <React.Fragment key={i}>
            <Gap $w={gap} />
            <Slot $w={w}>{Array.isArray(it) ? part(it[1]) : it.n}</Slot>
          </React.Fragment>
        );
      })}
    </>
  );
}
const menu = (list: [number, number, string][]): Item[] => list.map(([a, b, t]) => ({ a, b, n: <Fit w={b - a} t={t} /> }));

/* ---------- fields ---------- */

const Field = styled.span<{ $tone?: string }>`
  width: 100%;
  height: 28px;
  display: flex;
  align-items: center;
  background: #fff;
  border: 1px solid ${p => p.$tone || '#9a9fac'};
  padding: 0 1px 0 4px;
`;
const Drop = styled.span<{ $dim?: boolean }>`
  margin-left: auto;
  flex: none;
  width: 20px;
  height: 24px;
  display: flex;
  align-items: center;
  justify-content: center;
  border: 1px solid ${p => (p.$dim ? '#c0c6cc' : '#666')};
  background: ${p => (p.$dim ? '#f8f8f8' : 'linear-gradient(#f2f2f2 48%, #d8d8d8 52%, #dedede)')};
`;
const Swatch = styled.span<{ $c: string }>`
  width: 42px;
  height: 19px;
  flex: none;
  margin: 0 5px 0 -2px;
  border: 1px solid #333;
  background: ${p => p.$c};
`;
const Stroke = styled.span`
  flex: 1;
  height: 2px;
  margin-left: -2px;
  background: #7b7b7b;
`;
const Combo = ({ t, w, swatch, stroke, tone, dim }: { t?: string; w?: number; swatch?: string; stroke?: boolean; tone?: string; dim?: boolean }) => (
  <Field $tone={tone}>
    {swatch && <Swatch $c={swatch} />}
    {t && <Fit t={t} w={w || 50} />}
    {stroke && <Stroke />}
    <Drop $dim={dim}><Tri $s={5} $dim={dim} /></Drop>
  </Field>
);
const Spin = styled.span`
  margin-left: auto;
  display: grid;
  grid-template-rows: 11px 11px;
  width: 19px;
  i { justify-self: center; align-self: center; border-top-color: #4a62a8; border-bottom-color: #4a62a8; }
  i:first-child { border-top-color: transparent; }
  background: linear-gradient(#e9e9ee 46%, #9ca6c4 46% 54%, #e0e0e6 54%);
  outline: 1px solid #b7bccb;
`;

/* ---------- scrollbars, splitters, sidebars ---------- */

const Track = styled.div<{ $row?: boolean; $len?: number }>`
  display: flex;
  flex-direction: ${p => (p.$row ? 'row' : 'column')};
  align-items: center;
  flex: none;
  background: #efefef;
  ${p => (p.$row ? 'height: 20px;' : 'width: 20px;')}
  ${p => p.$len && (p.$row ? `width: ${p.$len}px;` : `height: ${p.$len}px;`)}
`;
const Thumb = styled.div<{ $row?: boolean; $len: number; $gap: number }>`
  flex: none;
  display: flex;
  align-items: center;
  justify-content: center;
  border: 1px solid #8f9196;
  border-radius: 2px;
  ${p => p.$row
    ? `width: ${p.$len}px; height: 18px; margin-left: ${p.$gap}px; background: linear-gradient(#f4f4f4 45%, #d2d3d6 50%, #dededf);`
    : `height: ${p.$len}px; width: 19px; margin-top: ${p.$gap}px; background: linear-gradient(90deg, #f4f4f4 40%, #d2d3d8 60%, #dcdde0);`}
`;
const Ribs = styled.i<{ $row?: boolean }>`
  width: 10px;
  height: 10px;
  background: repeating-linear-gradient(${p => (p.$row ? '90deg' : '180deg')}, #666 0 1.500px, #fff 1.500px 2px, transparent 2px 4px);
`;
const Push = styled.span<{ $row?: boolean }>`
  display: flex;
  ${p => (p.$row ? 'margin-left: auto; padding: 0 7px 0 0;' : 'margin-top: auto; padding-bottom: 8px;')}
`;
const Lead = styled.span<{ $row?: boolean }>`
  flex: none;
  display: flex;
  ${p => (p.$row ? 'width: 20px; padding-left: 8px;' : 'height: 20px; padding-top: 9px;')}
`;
function Scroll({ row, len, gap, thumb, end = true, ribs = true }: { row?: boolean; len: number; gap: number; thumb: number; end?: boolean; ribs?: boolean }) {
  return (
    <Track $row={row} $len={len}>
      <Lead $row={row}><Tri $dir={row ? 'l' : 'u'} $s={4} /></Lead>
      <Thumb $row={row} $len={thumb} $gap={gap}>{ribs && <Ribs $row={row} />}</Thumb>
      {end && <Push $row={row}><Tri $dir={row ? 'r' : undefined} $s={4} /></Push>}
    </Track>
  );
}
const Splitter = styled.div<{ $w: number; $top: number }>`
  width: ${p => p.$w}px;
  flex: none;
  padding-top: ${p => p.$top}px;
  display: flex;
  justify-content: center;
  border-left: 1px solid #f6f6f6;
  border-right: 1px solid #7f7f7f;
  background: #dcdcdc;
  &::after {
    content: '';
    width: 2px;
    height: 36px;
    background: repeating-linear-gradient(#666 0 2px, #f5f5f5 2px 4px, transparent 4px 6px);
  }
`;
const SideBar = styled.aside<{ $w: number; $pad?: number }>`
  width: ${p => p.$w}px;
  flex: none;
  display: flex;
  flex-direction: column;
  align-items: center;
  gap: 12px;
  padding: 11px ${p => p.$pad || 0}px 0 0;
  border-left: 1px solid #fafafa;
  background: #e0e0e0;
`;
const SideHead = styled.span`
  height: 28px;
  width: 24px;
  display: flex;
  justify-content: center;
  padding-top: 3px;
  border-bottom: 1px solid #c2c2c2;
  margin-bottom: -5px;
`;
const Side = ({ w, pad, icons }: { w: number; pad?: number; icons: string[] }) => (
  <SideBar $w={w} $pad={pad}>
    <SideHead><svg width="12" height="12"><path d="M1 1.500h6M1 4.500h6M1 7.500h5" stroke="#22304a" strokeWidth="1.200" /><path d="M5.500 7.500h6L8.500 11z" fill="#22304a" /></svg></SideHead>
    {icons.map(n => <SideIcon key={n} n={n} />)}
  </SideBar>
);

/* ---------- Base ---------- */

const BaseBody = styled.div`
  flex: 1;
  min-height: 0;
  display: grid;
  grid-template-columns: 128px 1fr;
  grid-template-rows: 357px;
  column-gap: 11px;
  padding: 11px 0 0 9px;
`;
const Panel = styled.div<{ $h?: number }>`
  background: #fff;
  border: 1px solid #fff;
  ${p => p.$h && `height: ${p.$h}px;`}
  display: flex;
  flex-direction: column;
`;
const PanelHead = styled.div`
  height: 35px;
  flex: none;
  display: flex;
  align-items: center;
  padding-left: 17px;
  background: #949494;
`;
const PanelCol = styled.div`
  display: flex;
  flex-direction: column;
  gap: 10px;
`;
const DbList = styled.div`
  display: flex;
  flex-direction: column;
  align-items: center;
  gap: 13px;
  padding: 21px 9px 0 0;
`;
const DbItem = styled.div<{ $on?: boolean }>`
  width: 92px;
  height: 57px;
  display: flex;
  flex-direction: column;
  align-items: center;
  gap: 1px;
  border: 1px solid ${p => (p.$on ? '#3b9bfb' : 'transparent')};
  background: ${p => (p.$on ? '#c2e0ff' : 'transparent')};
`;
const PanelBody = styled.div`
  flex: 1;
  min-height: 0;
  display: flex;
  padding: 17px 0 17px 36px;
`;
const TaskList = styled.div`
  width: 196px;
  flex: none;
  display: flex;
  flex-direction: column;
  gap: 4px;
  padding-top: 3px;
  overflow: hidden;
`;
const TaskRow = styled.div`
  display: flex;
  align-items: center;
  gap: 3px;
`;
const Mini = styled.div`
  width: 20px;
  height: 68px;
  flex: none;
  margin-right: 17px;
`;
const Detail = styled.div`
  flex: 1;
  border-left: 2px solid #8d8d8d;
  padding: 0 0 0 13px;
`;
const PreviewBox = styled.div`
  margin: 46px 0 0 6px;
  height: 75px;
  border: 1px solid #d6d6d6;
`;
const Status = styled.div<{ $h: number }>`
  height: ${p => p.$h}px;
  flex: none;
  display: flex;
  align-items: center;
  background: #e0e0e0;
`;
const StatSep = styled.i`
  width: 2px;
  height: 21px;
  background: linear-gradient(90deg, #8d8d8d 50%, #f0f0f0 50%);
`;
const st = (x: number): Item => ({ a: x, b: x + 2, n: <StatSep /> });

const BaseWindow = () => (
  <Window l={-2} t={-3} w={560} h={505} icon="base" title="AOS DB 2018.odb - OpenOffice Base" tw={243}>
    <MenuBar $up><Strip from={6} items={menu([[16, 39, '_File'], [60, 87, '_Edit'], [106, 138, '_View'], [159, 196, '_Insert'], [215, 252, '_Tools'], [273, 327, '_Window'], [348, 380, '_Help']])} /></MenuBar>
    <ToolBar $h={31}><Strip from={6} items={[[11, '::'], [30, 'writer'], [48, 'v'], [66, 'open'], [84, 'v'], [103, 'save'], [119, '|'], [135, '-copy'], [161, '-paste'], [180, 'V'], [189, '|'], [206, '-az'], [231, '-za'], [248, '|'], [264, 'formnew'], [282, 'v'], [292, '|'], [309, 'help'], [333, 'o'], [341, '||'], [346, '::'], [365, 'tblopen'], [390, 'tbledit'], [415, 'tbldel'], [441, 'tblren'], [465, 'o'], [471, '||']]} /></ToolBar>
    <BaseBody>
      <Panel>
        <PanelHead><Fit w={66} t="Database" bold color="#f2f2f2" /></PanelHead>
        <DbList>
          {[['tables', 'T_ables', 43], ['queries', '_Queries', 50], ['forms', 'For_ms', 40], ['reports', '_Reports', 51]].map(([n, t, w], i) => (
            <DbItem key={n} $on={i === 0}>
              <Svg $s={34} viewBox="0 0 34 34">{big[n as string]}</Svg>
              <Fit w={w as number} t={t as string} />
            </DbItem>
          ))}
        </DbList>
      </Panel>
      <PanelCol>
        <Panel $h={140}>
          <PanelHead><Fit w={38} t="Tasks" bold color="#f2f2f2" /></PanelHead>
          <PanelBody>
            <TaskList>
              <TaskRow><Icon n="tasktbl" s={17} /><Fit w={173} t="_Use Wizard to Create Tabl" /></TaskRow>
              <TaskRow><Icon n="taskview" s={17} /><Fit w={89} t="Create View..." /></TaskRow>
            </TaskList>
            <Mini><Scroll len={68} gap={12} thumb={14} /></Mini>
            <Detail><Fit w={80} t="Description" bold lh={22} /></Detail>
          </PanelBody>
        </Panel>
        <Panel $h={207}>
          <PanelHead><Fit w={44} t="Tables" bold color="#f2f2f2" /></PanelHead>
          <PanelBody>
            <TaskList><TaskRow><Icon n="asset" s={17} /><Fit w={42} t="Assets" /></TaskRow></TaskList>
            <Mini />
            <Detail><PreviewBox /></Detail>
          </PanelBody>
        </Panel>
      </PanelCol>
    </BaseBody>
    <Status $h={22}><Strip from={6} items={[{ a: 18, b: 158, n: <Fit w={140} t="Embedded database" /> }, st(213), { a: 221, b: 374, n: <Fit w={153} t="HSQL database engine" /> }, st(430)]} /></Status>
  </Window>
);

/* ---------- rulers ---------- */

const RulerRow = styled.div<{ $h: number; $pad: number }>`
  height: ${p => p.$h}px;
  flex: none;
  display: flex;
  align-items: center;
  padding-left: ${p => p.$pad}px;
  background: #e0e0e0;
  overflow: hidden;
`;
const RulerCell = styled.div<{ $w: number; $gray?: boolean; $v?: boolean; $h?: number; $tabs?: boolean }>`
  flex: none;
  display: flex;
  flex-direction: ${p => (p.$v ? 'column' : 'row')};
  align-items: center;
  ${p => (p.$v ? `height: ${p.$w}px; width: 22px;` : `width: ${p.$w}px; height: ${p.$h || 24}px;`)}
  background: ${p => p.$tabs
    ? 'linear-gradient(#333, #333) 1px 100% / 2px 4px no-repeat, linear-gradient(#333, #333) 0 100% / 4px 1px no-repeat, linear-gradient(#333, #333) 50% 100% / 2px 4px no-repeat, linear-gradient(#333, #333) 50% 100% / 5px 1px no-repeat, #fff'
    : p.$gray ? '#dcdcdc' : '#fff'};
  font-size: 14.500px;
  line-height: 16px;
  b { font-weight: 400; ${p => p.$v && 'transform: rotate(-90deg);'} }
`;
const Dots = styled.i<{ $v?: boolean; $p: number }>`
  flex: 1;
  ${p => (p.$v ? 'width: 1.500px;' : 'height: 1.500px;')}
  background: repeating-linear-gradient(${p => (p.$v ? '180deg' : '90deg')}, transparent 0 ${p => p.$p - 1.5}px, #444 ${p => p.$p - 1.5}px ${p => p.$p}px);
`;
const HalfTick = styled.i<{ $v?: boolean }>`
  background: #222;
  ${p => (p.$v ? 'width: 4px; height: 2px;' : 'width: 2px; height: 4px;')}
`;
const Cell = ({ n, w, v, p, gray, h, tabs }: { n?: string; w: number; v?: boolean; p: number; gray?: boolean; h?: number; tabs?: boolean }) => (
  <RulerCell $w={w} $v={v} $gray={gray} $h={h} $tabs={tabs}>
    <HalfTick $v={v} /><Dots $v={v} $p={p} />{n && <b>{n}</b>}{n && <Dots $v={v} $p={p} />}
  </RulerCell>
);

/* ---------- Writer ---------- */

const TabBox = styled.span`
  width: 22px;
  height: 23px;
  flex: none;
  border: 1px solid #8c8c8c;
  display: flex;
  align-items: center;
  justify-content: center;
  margin-right: 43px;
  &::after { content: ''; width: 6px; height: 6px; border-left: 2px solid #111; border-bottom: 2px solid #111; }
`;
const MarginRuler = styled.span`
  width: 55px;
  height: 24px;
  flex: none;
  border: 1px solid #8c8c8c;
  border-right: 0;
  display: flex;
  align-items: center;
  background: #dcdcdc;
`;
const WriterBody = styled.div`
  flex: 1;
  min-height: 0;
  display: flex;
`;
const VRuler = styled.div`
  width: 34px;
  flex: none;
  display: flex;
  flex-direction: column;
  padding: 33px 0 0 6px;
  overflow: hidden;
`;
const VMargin = styled.div`
  width: 22px;
  height: 61px;
  flex: none;
  display: flex;
  flex-direction: column;
  align-items: center;
  border: 1px solid #8c8c8c;
  background: #dcdcdc;
`;
const Canvas = styled.div`
  flex: 1;
  background: #999;
  border: solid #111;
  border-width: 1px 0 0 1px;
  padding: 30px 0 0 35px;
`;
const Paper = styled.div`
  height: 100%;
  background: #fff;
  border: solid #000;
  border-width: 1px 0 0 1px;
  padding: 62px 0 0 62px;
`;
const PaperMargin = styled.div`
  height: 100%;
  border: solid #bdbdbd;
  border-width: 1px 0 0 1px;
`;

const WriterWindow = () => (
  <Window l={522} t={-3} w={600} h={520} icon="writer" title="Untitled 6 - OpenOffice Writer" tw={200}>
    <MenuBar $up><Strip from={530} items={menu([[541, 564, '_File'], [584, 611, '_Edit'], [631, 663, '_View'], [683, 720, '_Insert'], [740, 788, 'F_ormat'], [808, 845, 'T_able'], [865, 901, '_Tools'], [922, 977, '_Window'], [997, 1030, '_Help']])} /></MenuBar>
    <ToolBar $h={31}><Strip from={530} items={[[536, '::'], [554, 'writer'], [572, 'v'], [590, 'open'], [608, 'v'], [627, '-save'], [653, 'mail'], [670, '|'], [685, '-edit'], [703, '|'], [719, 'pdf'], [745, 'print'], [770, 'preview'], [787, '|'], [803, 'spell'], [829, '*auto'], [846, '|'], [862, '-cut'], [886, '-copy'], [911, 'paste'], [930, 'v'], [950, 'brush'], [966, '|'], [981, 'undo'], [999, 'V'], [1017, 'redo'], [1036, 'V'], [1047, '|'], [1063, 'globe'], [1087, 'table']]} /></ToolBar>
    <ToolBar $h={33}><Strip from={530} items={[[536, '::'], [555, 'styles'], { a: 576, b: 761, n: <Combo t="Default" w={51} /> }, { a: 770, b: 977, n: <Combo t="Times New Roman" w={125} /> }, { a: 986, b: 1069, n: <Combo t="12" w={16} /> }]} /></ToolBar>
    <RulerRow $h={32} $pad={6}>
      <TabBox />
      <MarginRuler><Dots $p={9.8} /></MarginRuler>
      <svg width="16" height="24"><path d="M.500.500h15v3L9 12l6.500 8.500v3H.500v-3L7 12 .500 3.500z" fill="#e4e4e4" stroke="#777" /></svg>
      <Cell w={30} p={9.800} />
      {['1', '2', '3', '4', '5'].map(n => <Cell key={n} n={n} w={78.700} p={9.800} tabs />)}
    </RulerRow>
    <WriterBody>
      <VRuler>
        <VMargin><Dots $v $p={9.800} /></VMargin>
        <Cell w={36} v p={9.800} />
        {['1', '2', '3'].map(n => <Cell key={n} n={n} w={78.700} v p={9.800} />)}
      </VRuler>
      <Canvas><Paper><PaperMargin /></Paper></Canvas>
    </WriterBody>
  </Window>
);

/* ---------- Calc ---------- */

const Split = styled.div`
  flex: 1;
  min-height: 0;
  display: flex;
`;
const Column = styled.div<{ $w?: number }>`
  ${p => (p.$w ? `width: ${p.$w}px; flex: none;` : 'flex: 1; min-width: 0;')}
  display: flex;
  flex-direction: column;
`;
const FormulaBar = styled.div`
  height: 35px;
  flex: none;
  display: flex;
  align-items: center;
  padding-bottom: 1px;
  border-bottom: 1px solid #6e6e6e;
  border-top: 1px solid #eee;
`;
const FormulaInput = styled.span`
  width: 100%;
  height: 27px;
  background: #fff;
  border: 1px solid #d6d6d6;
  border-top: 2px solid #777;
  border-left: 1px solid #777;
`;
const Sheet = styled.div`
  width: 681px;
  margin-left: 1px;
  flex: none;
  display: grid;
  grid-template-columns: 43px repeat(6, 104px) 15px;
  grid-template-rows: 23px;
  grid-auto-rows: 20px;
  overflow: hidden;
`;
const Head = styled.div<{ $on?: boolean; $side?: boolean }>`
  display: flex;
  align-items: center;
  justify-content: center;
  overflow: hidden;
  border: solid #777;
  border-width: 0 1px 1px 0;
  font-weight: ${p => (p.$on ? 700 : 400)};
  color: ${p => (p.$on ? '#fff' : '#111')};
  background: ${p => p.$on
    ? `linear-gradient(${p.$side ? '90deg' : '180deg'}, #80bfff 48%, #3399ff 50%)`
    : `linear-gradient(${p.$side ? '90deg' : '180deg'}, #ebebeb 48%, #dfdfdf 50%)`};
`;
const Td = styled.div<{ $on?: boolean }>`
  border: solid #bcbcbc;
  border-width: 0 1px 1px 0;
  background: #fff;
  ${p => p.$on && css`
    position: relative;
    outline: 2px solid #000;
    outline-offset: -1px;
    z-index: 1;
    &::after { content: ''; position: absolute; right: -4px; bottom: -4px; width: 6px; height: 6px; background: #000; }
  `}
`;
const SheetScroll = styled.div`
  border-top: 3px solid #000;
  width: 22px;
`;

const CalcWindow = () => (
  <Window l={1087} t={-3} w={768} h={500} icon="calc" title="Untitled 2 - OpenOffice Calc" tw={186} caption>
    <MenuBar $up><Strip from={1095} items={menu([[1105, 1129, '_File'], [1149, 1176, '_Edit'], [1195, 1227, '_View'], [1247, 1285, '_Insert'], [1304, 1353, 'F_ormat'], [1372, 1409, '_Tools'], [1429, 1461, '_Data'], [1481, 1537, '_Window'], [1557, 1589, '_Help']])} /></MenuBar>
    <ToolBar $h={31}><Strip from={1095} items={[[1101, '::'], [1119, 'calc'], [1137, 'v'], [1155, 'open'], [1173, 'v'], [1192, '-save'], [1217, 'mail'], [1234, '|'], [1250, '-edit'], [1267, '|'], [1284, 'pdf'], [1309, 'print'], [1335, 'preview'], [1351, '|'], [1368, 'spell'], [1394, '*auto'], [1410, '|'], [1427, 'cut'], [1452, 'copy'], [1476, 'paste'], [1494, 'v'], [1514, 'brush'], [1530, '|'], [1546, 'undo'], [1564, 'V'], [1582, 'redo'], [1601, 'V'], [1611, '|'], [1628, 'globe'], [1653, 'az'], [1678, 'za'], [1694, '|'], [1711, 'chart'], [1737, 'O'], [1744, '||'], [1749, '::'], { a: 1759, b: 1821, n: <Fit w={62} t="Find Text" /> }, [1839, 'O']]} /></ToolBar>
    <ToolBar $h={33}><Strip from={1095} items={[[1101, '::'], [1120, 'styles'], { a: 1141, b: 1348, n: <Combo t="Arial" w={30} /> }, { a: 1357, b: 1440, n: <Combo t="10" w={15} /> }, [1461, 'B'], [1486, 'I'], [1512, 'U'], [1528, '|'], [1545, 'left'], [1570, 'center'], [1595, 'right'], [1621, 'just'], [1646, 'merge'], [1662, '|'], [1679, 'coins'], [1704, 'pct'], [1730, 'dpct'], [1755, 'adec'], [1780, 'ddec'], [1797, '|'], [1814, 'outdent'], [1839, 'O']]} /></ToolBar>
    <Split>
      <Column $w={704}>
        <FormulaBar><Strip from={1095} items={[{ a: 1101, b: 1259, n: <Combo dim tone="#a9c6dc" /> }, [1279, 'fxw'], [1304, 'sumg'], [1330, 'eqg'], { a: 1352, b: 1795, n: <FormulaInput /> }]} /></FormulaBar>
        <Split>
          <Sheet>
            <Head />
            {['A', 'B', 'C', 'D', 'E', 'F', ''].map((c, i) => <Head key={i} $on={i === 0}>{c}</Head>)}
            {Array.from({ length: 13 }, (_, r) => (
              <React.Fragment key={r}>
                <Head $on={r === 0} $side>{r + 1}</Head>
                {[0, 1, 2, 3, 4, 5, 6].map(c => <Td key={c} $on={r === 0 && c === 0} />)}
              </React.Fragment>
            ))}
          </Sheet>
          <SheetScroll><Scroll len={400} gap={3} thumb={140} /></SheetScroll>
        </Split>
      </Column>
      <Splitter $w={8} $top={185} />
      <Side w={36} icons={['cubes', 'wizard', 'picture', 'nav', 'fx']} />
    </Split>
  </Window>
);

/* ---------- Draw ---------- */

const DrawRulerRow = styled.div`
  height: 34px;
  flex: none;
  display: flex;
  align-items: center;
  justify-content: flex-end;
  border-bottom: 2px solid #111;
  overflow: hidden;
`;
const DrawRuler = styled.div`
  position: relative;
  display: flex;
  width: 210px;
  height: 24px;
  border-bottom: 1px solid #999;
  border-top: 1px solid #aaa;
  svg { position: absolute; left: 102px; top: 10px; }
`;
const DrawCanvas = styled.div`
  flex: 1;
  min-height: 0;
  background: #fff;
  padding: 7px 85px 12px 300px;
`;
const DrawPage = styled.div`
  height: 100%;
  border: 1.500px solid #8d8d8d;
  box-shadow: 3px 3px 4px rgba(0, 0, 0, 0.35);
  background: #fff;
  padding: 12px 13px;
`;
const DrawMargin = styled.div`
  height: 100%;
  border: 1px solid #c0c0c0;
`;
const TabRow = styled.div`
  height: 23px;
  flex: none;
  display: flex;
  justify-content: flex-end;
  align-items: center;
`;
const LayerTab = styled.div`
  display: flex;
  align-items: center;
  height: 21px;
  border: solid #555;
  border-width: 1px 0 1px;
`;
const DrawWindow = () => (
  <Window l={1091} t={426} w={774} h={653} icon="draw" title="Untitled 3 - OpenOffice Draw" tw={193} caption>
    <MenuBar $up><Strip from={1099} items={menu([[1109, 1133, '_File'], [1152, 1180, '_Edit'], [1199, 1232, '_View'], [1251, 1289, '_Insert'], [1309, 1357, 'F_ormat'], [1376, 1413, '_Tools'], [1433, 1480, '_Modify'], [1500, 1556, '_Window'], [1576, 1609, '_Help']])} /></MenuBar>
    <ToolBar $h={31}><Strip from={1099} items={[[1578, '|'], [1595, 'chart'], [1621, 'globe'], [1638, '|'], [1653, 'compass'], [1678, 'preview'], [1697, 'v'], [1708, '|'], [1724, 'help'], [1748, 'o'], [1755, '||']]} /></ToolBar>
    <ToolBar $h={33}><Strip from={1099} items={[[1569, 'bucket'], { a: 1590, b: 1680, n: <Combo t="Color" w={36} /> }, { a: 1682, b: 1818, n: <Combo swatch="#cde6f5" t="Blue class" w={64} /> }]} /></ToolBar>
    <Split>
      <Column $w={708}>
        <Split>
          <Column>
            <DrawRulerRow>
              <DrawRuler>
                {['5', '6', '7'].map(n => <Cell key={n} n={n} w={35} p={4.400} h={22} />)}
                {['8', '9', '10'].map(n => <Cell key={n} n={n} w={35} p={4.400} gray h={22} />)}
                <svg width="18" height="14"><path d="M9 1l7.500 8v4H1.500V9z" fill="#e6e6e6" stroke="#777" /></svg>
              </DrawRuler>
            </DrawRulerRow>
            <DrawCanvas><DrawPage><DrawMargin /></DrawPage></DrawCanvas>
          </Column>
          <Scroll len={435} gap={98} thumb={204} />
        </Split>
        <TabRow>
          <LayerTab><Fit w={62} t="sion Lines" /><svg width="20" height="20"><path d="M4 20L12 0M14.500 0v20h5V0" stroke="#555" fill="none" /></svg></LayerTab>
          <Scroll row len={139} gap={24} thumb={49} />
          <Gap $w={21} />
        </TabRow>
      </Column>
      <Splitter $w={9} $top={210} />
      <Side w={40} pad={3} icons={['cubes', 'wizard', 'picture', 'nav']} />
    </Split>
    <ToolBar $h={31} $glow><Strip from={1099} items={[[1580, 'star'], [1600, 'v'], [1610, '|'], [1627, 'points'], [1652, 'glue'], [1668, '|'], [1685, 'tframe'], [1711, 'shapes'], [1736, 'pframe'], [1752, '|'], [1767, 'rotate'], [1786, 'v'], [1805, 'align'], [1823, 'v']]} /></ToolBar>
    <Status $h={28}><Strip from={1099} items={[st(1580), { a: 1588, b: 1656, n: <Fit w={68} t="Slide 1 / 1" /> }, st(1663), { a: 1671, b: 1722, n: <Fit w={51} t="Default" /> }, st(1728), { a: 1733, b: 1845, n: <svg width="112" height="20"><path d="M17 9.500h95M66 5v10" stroke="#888" /><circle cx="6" cy="11" r="5" fill="#d8ecfa" stroke="#4f6f88" /><path d="M3.500 11h5" stroke="#2a5a86" strokeWidth="1.500" /><circle cx="29" cy="10" r="4" fill="#5a89a8" stroke="#2d4f66" /></svg> }]} /></Status>
  </Window>
);

/* ---------- Math ---------- */

const MathView = styled.div`
  height: 207px;
  flex: none;
  background: #fff;
`;
const MathSplit = styled.div`
  height: 9px;
  flex: none;
  border-top: 1px solid #ddd;
  border-bottom: 1.500px solid #000;
  background: linear-gradient(#fafafa 2px, #dedede 2px);
`;
const MathCmd = styled.div`
  flex: 1;
  min-height: 0;
  margin-left: 3px;
  padding: 9px 0 9px 8px;
  border: solid #888;
  border-width: 1px 0 1.500px 1px;
  display: flex;
`;
const MathBox = styled.div`
  flex: 1;
  display: flex;
  flex-direction: column;
  justify-content: flex-end;
  background: #fff;
  border: 1px solid #888;
`;
const MathWindow = () => (
  <Window l={-11} t={498} w={520} h={582} icon="math" title="Untitled 5 - OpenOffice Math" tw={193}>
    <MenuBar><Strip from={-3} items={menu([[8, 31, '_File'], [52, 79, '_Edit'], [98, 130, '_View'], [151, 199, 'F_ormat'], [218, 255, '_Tools'], [275, 330, '_Window'], [351, 383, '_Help']])} /></MenuBar>
    <ToolBar $h={32}><Strip from={-3} items={[[3, '::'], [21, 'zin'], [47, 'zout'], [73, 'z100'], [97, 'zall'], [114, '|'], [131, 'refresh'], [157, '*fcursor'], [181, 'sigma'], [206, 'o'], [213, '||'], [218, '::'], [236, 'math'], [255, 'v'], [273, 'open'], [291, 'v'], [310, '-save'], [335, 'mail'], [352, '|'], [369, 'pdf'], [393, 'print'], [410, '|'], [427, '-cut'], [452, '-copy']]} /></ToolBar>
    <MathView />
    <MathSplit />
    <MathCmd><MathBox><Scroll row len={500} gap={1} thumb={480} end={false} ribs={false} /></MathBox></MathCmd>
    <Status $h={27}><Strip from={-3} items={[st(320), { a: 327, b: 366, n: <Fit w={39} t="100 %" /> }, st(376), st(395)]} /></Status>
  </Window>
);

/* ---------- Impress ---------- */

const SlideBox = styled.div<{ $w: number; $h: number; $thumb?: boolean }>`
  width: ${p => p.$w}px;
  height: ${p => p.$h}px;
  flex: none;
  display: flex;
  flex-direction: column;
  ${p => (p.$thumb ? 'border: 1px solid #e8ecf2; outline: 2px solid #8d9095; margin: 2px;' : '')}
  box-shadow: 2px 3px 6px rgba(0, 0, 0, ${p => (p.$thumb ? 0.4 : 0.55)});
  background: radial-gradient(circle ${p => p.$w * 1.05}px at 16% 84%, #071328 0, #08162e 8%, #0c2146 20%, #102e62 32%, #163f85 45%, #1b52aa 55%, #2266d6 69%, #3a76dc 80%, #4b84dd 95%);
`;
const SlideHead = styled.div<{ $h: number; $thumb?: boolean }>`
  height: ${p => p.$h}px;
  flex: none;
  display: flex;
  flex-direction: column;
  align-items: center;
  justify-content: center;
  padding: ${p => (p.$thumb ? '0' : '2px 2px 0 0')};
  background: #06132b;
  border-top: ${p => (p.$thumb ? '1px solid #1d3f7c' : '2px solid #3f78cc')};
  border-bottom: ${p => (p.$thumb ? '0' : '3px double #16366e')};
`;
const SlideRule = styled.div<{ $h: number }>`
  height: ${p => p.$h}px;
  flex: none;
  border-top: 1px solid rgba(90, 150, 235, 0.5);
  border-bottom: 1px solid rgba(90, 150, 235, 0.4);
`;
const SlideBody = styled.div<{ $pad: number; $left?: boolean }>`
  flex: 1;
  display: flex;
  justify-content: ${p => (p.$left ? 'flex-start' : 'center')};
  padding: ${p => p.$pad}px 0 0 ${p => (p.$left ? 16 : 0)}px;
`;
const Bullet = styled.i`
  width: 3px;
  height: 3px;
  margin: 5px 5px 0 1px;
  border-radius: 50%;
  background: #f2f21e;
`;
const SlideFoot = styled.div`
  height: 34px;
  flex: none;
  border-top: 1.500px solid #3c76cf;
`;
const SlidesPane = styled.div`
  width: 281px;
  flex: none;
  display: flex;
  flex-direction: column;
  padding: 0 4px 3px;
`;
const PaneHead = styled.div`
  height: 27px;
  flex: none;
  display: flex;
  align-items: center;
  justify-content: space-between;
  padding: 3px 2px 0 1px;
`;
const SlideList = styled.div`
  flex: 1;
  min-height: 0;
  display: flex;
  border: 1px solid #8d8d8d;
  border-bottom: 0;
  background: #fff;
  overflow: hidden;
`;
const Thumbs = styled.div`
  width: 251px;
  flex: none;
  display: flex;
  flex-direction: column;
  gap: 10px;
  padding: 10px 0 0 8px;
`;
const ThumbRow = styled.div<{ $on?: boolean }>`
  width: 234px;
  height: 161px;
  flex: none;
  display: flex;
  padding: 2px 2px 0 12px;
  justify-content: space-between;
  border: 1px solid ${p => (p.$on ? '#5c86b0' : 'transparent')};
  background: ${p => (p.$on ? '#a2c3e3' : 'transparent')};
`;
const Tabs = styled.div`
  height: 34px;
  flex: none;
  display: flex;
  align-items: flex-end;
  padding: 0 0 2px 5px;
`;
const Tab = styled.div<{ $w: number; $on?: boolean }>`
  width: ${p => p.$w}px;
  height: ${p => (p.$on ? 29 : 26)}px;
  display: flex;
  align-items: center;
  padding-left: 3px;
  border: solid #8e9199;
  border-width: 1px 2px 0 0;
  background: ${p => (p.$on ? '#fff' : 'linear-gradient(#ececec 45%, #dadada 50%, #e2e2e2)')};
`;
const Work = styled.div`
  flex: 1;
  min-height: 0;
  background: #999;
  padding: 7px 0 0 122px;
`;
const Foot = styled.div`
  height: 24px;
  flex: none;
  display: flex;
  align-items: flex-start;
  padding-top: 4px;
  background: #e0e0e0;
`;
const Thumbnail = ({ n, on, lines, sub, bullet }: { n: string; on?: boolean; lines: [string, number][]; sub?: boolean; bullet?: boolean }) => (
  <ThumbRow $on={on}>
    <Fit w={9} t={n} size={16} color={on ? '#4c5560' : '#7a7a7a'} />
    <SlideBox $w={203} $h={151} $thumb>
      <SlideHead $h={35} $thumb>{lines.map(([t, w]) => <Fit key={t} t={t} w={w} bold size={11} lh={13} font={ARIAL} color="#fff" />)}</SlideHead>
      <SlideRule $h={3} />
      <SlideBody $pad={sub ? 37 : 3} $left={bullet}>
        {bullet && <Bullet />}
        {sub && <Fit t="Alaska Office Specialists" w={89} size={8} lh={12} font={ARIAL} color="#fff" />}
        {bullet && <Fit t="State the intended goal" w={85} size={8} lh={12} font={ARIAL} color="#fff" />}
      </SlideBody>
    </SlideBox>
  </ThumbRow>
);

const ImpressWindow = () => (
  <Window l={459} t={484} w={1109} h={619} icon="impress" title="Untitled 4 - OpenOffice Impress" tw={210} th={34} caption active>
    <MenuBar><Strip from={467} items={[...menu([[477, 500, '_File'], [520, 547, '_Edit'], [567, 598, '_View'], [618, 657, '_Insert'], [676, 724, 'F_ormat'], [744, 780, '_Tools'], [800, 873, '_Slide Show'], [894, 949, '_Window'], [970, 1002, '_Help']]), { a: 1522, b: 1538, n: <Icon n="download" s={16} /> }]} /></MenuBar>
    <ToolBar $h={31}><Strip from={467} items={[[472, '::'], [490, 'impress'], [508, 'v'], [527, 'open'], [545, 'v'], [564, 'save'], [589, 'mail'], [605, '|'], [622, '-edit'], [640, '|'], [656, 'pdf'], [681, 'print'], [697, '|'], [714, 'spell'], [740, '*auto'], [756, '|'], [773, '-cut'], [797, '-copy'], [823, 'paste'], [849, '-brush'], [865, '|'], [881, 'undo'], [899, 'V'], [917, 'redo'], [936, 'V'], [946, '|'], [963, 'chart'], [987, 'table'], [1005, 'v'], [1025, 'globe'], [1041, '|'], [1058, 'grid'], [1074, '|'], [1090, 'compass'], [1115, 'preview'], [1134, 'v'], [1144, '|'], [1161, 'help'], [1185, 'o'], [1192, '||'], [1197, '::'], [1215, 'slidenew'], [1234, 'v'], [1252, 'slide'], [1270, 'v'], [1289, 'design'], [1305, '|'], [1323, 'present'], [1347, 'o'], [1354, '||']]} /></ToolBar>
    <ToolBar $h={33}><Strip from={467} items={[[472, '::'], [490, 'styles'], [507, '|'], [524, 'pen'], [549, 'arrows'], [567, 'v'], { a: 582, b: 692, n: <Combo stroke tone="#777b86" /> }, { a: 701, b: 782, n: <Field $tone="#b4b8c4"><Fit t={'0.00 "'} w={38} /><Spin><Tri $dir="u" /><Tri /></Spin></Field> }, { a: 791, b: 915, n: <Combo swatch="#000" t="Black" w={36} tone="#777b86" /> }, [937, 'bucket'], { a: 957, b: 1048, n: <Combo t="Color" w={36} tone="#777b86" /> }, { a: 1050, b: 1185, n: <Combo swatch="#00b8ff" t="[]" w={9} tone="#777b86" /> }, [1209, 'shadowed'], [1233, 'o'], [1240, '||']]} /></ToolBar>
    <Split>
      <SlidesPane>
        <PaneHead>
          <Fit w={39} t="Slides" bold />
          <svg width="9" height="9"><path d="M1 1l7 7M8 1L1 8" stroke="#5a6878" strokeWidth="1.700" /></svg>
        </PaneHead>
        <SlideList>
          <Thumbs>
            <Thumbnail n="1" on sub lines={[['Websites Beginning with the End', 177], ['in Mind', 38]]} />
            <Thumbnail n="2" bullet lines={[['Long-term Goal', 83]]} />
            <Thumbnail n="3" lines={[['Customer Wishes', 95]]} />
          </Thumbs>
          <Scroll len={397} gap={3} thumb={114} />
        </SlideList>
      </SlidesPane>
      <Splitter $w={8} $top={197} />
      <Column $w={758}>
        <Tabs>
          <Tab $w={63} $on><Fit w={53} t="Normal" bold /></Tab>
          <Tab $w={56}><Fit w={46} t="Outline" /></Tab>
          <Tab $w={48}><Fit w={40} t="Notes" /></Tab>
          <Tab $w={68}><Fit w={59} t="Handout" /></Tab>
          <Tab $w={86}><Fit w={78} t="Slide Sorter" /></Tab>
        </Tabs>
        <Split>
          <Work>
            <SlideBox $w={480} $h={356}>
              <SlideHead $h={82}>
                <Fit t="Websites Beginning with the End" w={422} bold size={26} lh={30} font={ARIAL} color="#fff" />
                <Fit t="in Mind" w={91} bold size={26} lh={30} font={ARIAL} color="#fff" />
              </SlideHead>
              <SlideRule $h={5} />
              <SlideBody $pad={93}><Fit t="Alaska Office Specialists" w={213} size={19} lh={24} font={ARIAL} color="#fff" /></SlideBody>
              <SlideFoot />
            </SlideBox>
          </Work>
          <Scroll len={374} gap={84} thumb={170} />
          <Gap $w={3} />
        </Split>
        <Scroll row len={736} gap={174} thumb={351} />
      </Column>
      <Splitter $w={6} $top={197} />
      <Side w={38} icons={['cubes', 'props', 'fav', 'trans', 'wizard', 'picture', 'nav']} />
    </Split>
    <ToolBar $h={31} $glow><Strip from={467} items={[[472, '::'], [491, '*pointer'], [507, '|'], [523, 'line'], [550, 'arrow'], [575, 'rect'], [600, 'ellipse'], [625, 'T'], [642, '|'], [658, 'pencil'], [676, 'v'], [694, 'connector'], [712, 'v'], [730, 'diamond'], [749, 'v'], [766, 'smile'], [785, 'v'], [802, 'dbl'], [821, 'v'], [840, 'flow'], [858, 'v'], [876, 'callout'], [894, 'v'], [911, 'star'], [931, 'v'], [941, '|'], [958, 'points'], [983, 'glue'], [999, '|'], [1016, 'tframe'], [1041, 'shapes'], [1067, 'pframe'], [1083, '|'], [1099, 'rotate'], [1125, 'align'], [1143, 'v'], [1161, 'arrange'], [1179, 'v'], [1189, '|'], [1206, 'extrude'], [1232, 'spark'], [1256, 'o'], [1263, '||']]} /></ToolBar>
    <Foot><Strip from={467} items={[st(783), st(1007), st(1029), st(1060), st(1143), st(1356)]} /></Foot>
  </Window>
);

export default function App() {
  return (
    <>
      <Global />
      <Desktop>
        <BaseWindow />
        <WriterWindow />
        <CalcWindow />
        <DrawWindow />
        <MathWindow />
        <ImpressWindow />
      </Desktop>
    </>
  );
}
